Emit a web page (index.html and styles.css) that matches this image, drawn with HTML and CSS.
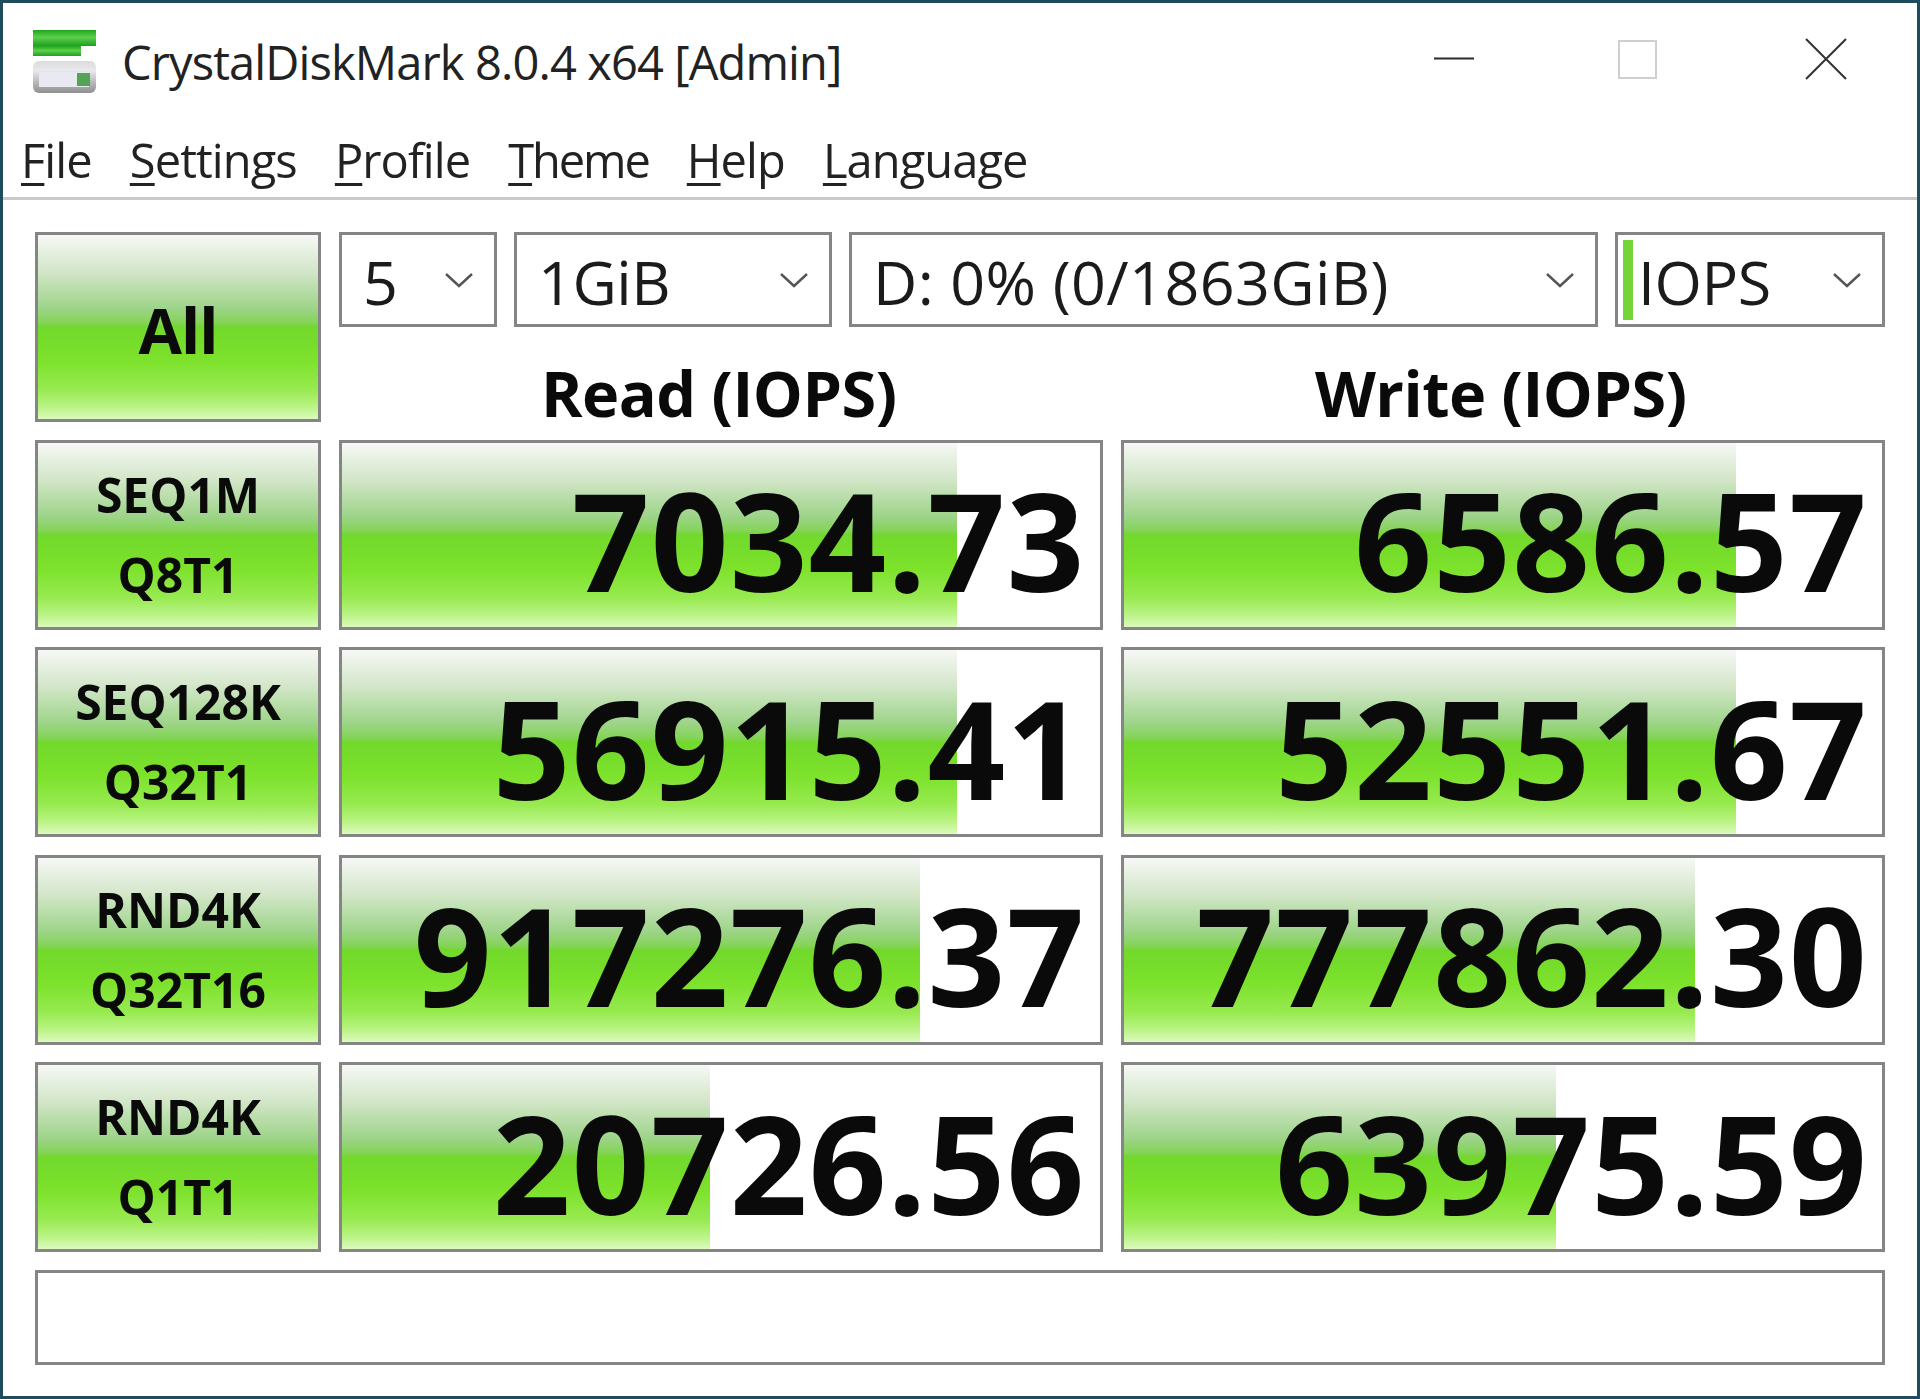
FILE: index.html
```html
<!DOCTYPE html>
<html lang="en">
<head>
<meta charset="utf-8">
<title>CrystalDiskMark 8.0.4 x64 [Admin]</title>
<link rel="stylesheet" href="styles.css">
</head>
<body>
<div class="window">
  <header class="titlebar">
    <svg class="app-icon" width="63" height="63" viewBox="0 0 63 63">
      <defs>
        <linearGradient id="gr" x1="0" y1="0" x2="0" y2="1"><stop offset="0" stop-color="#1fa51f"/><stop offset=".45" stop-color="#5ed04a"/><stop offset="1" stop-color="#1f9f25"/></linearGradient>
        <linearGradient id="dk" x1="0" y1="0" x2="0" y2="1"><stop offset="0" stop-color="#dcdcdc"/><stop offset=".3" stop-color="#e8e8ee"/><stop offset="1" stop-color="#8f8f8f"/></linearGradient>
      </defs>
      <rect x="0" y="0" width="63" height="16" fill="url(#gr)"/>
      <rect x="0" y="16" width="48" height="10" fill="url(#gr)"/>
      <rect x="0" y="31" width="63" height="32" rx="6" fill="url(#dk)"/>
      <rect x="6" y="42" width="50" height="15" fill="#e9e9f2"/>
      <rect x="44" y="43" width="13" height="13" fill="#55a355"/>
    </svg>
    <h1 class="title">CrystalDiskMark 8.0.4 x64 [Admin]</h1>
    <div class="controls">
      <svg class="ctl" width="42" height="42" viewBox="0 0 42 42"><path d="M1 20.5H41" stroke="#2b2b2b" stroke-width="2.2" fill="none"/></svg>
      <svg class="ctl" width="42" height="42" viewBox="0 0 42 42"><rect x="0" y="3" width="37" height="37" stroke="#cfcfcf" stroke-width="2" fill="none"/></svg>
      <svg class="ctl" width="42" height="42" viewBox="0 0 42 42"><path d="M1 1L41 41M41 1L1 41" stroke="#333" stroke-width="2" fill="none"/></svg>
    </div>
  </header>
  <nav class="menu">
    <span class="menu-item"><u>F</u>ile</span>
    <span class="menu-item"><u>S</u>ettings</span>
    <span class="menu-item"><u>P</u>rofile</span>
    <span class="menu-item menu-tight"><u>T</u>heme</span>
    <span class="menu-item"><u>H</u>elp</span>
    <span class="menu-item"><u>L</u>anguage</span>
  </nav>
  <main class="panel">
    <div class="btn btn-all">All</div>
    <div class="top">
      <div class="selects">
        <div class="combo combo-count"><span>5</span><svg class="chev" width="30" height="16" viewBox="0 0 30 16"><path d="M2 2L15 14L28 2" /></svg></div>
        <div class="combo combo-size"><span>1GiB</span><svg class="chev" width="30" height="16" viewBox="0 0 30 16"><path d="M2 2L15 14L28 2" /></svg></div>
        <div class="combo combo-drive"><span>D: 0% (0/1863GiB)</span><svg class="chev" width="30" height="16" viewBox="0 0 30 16"><path d="M2 2L15 14L28 2" /></svg></div>
        <div class="combo combo-unit"><i class="stripe"></i><span>IOPS</span><svg class="chev" width="30" height="16" viewBox="0 0 30 16"><path d="M2 2L15 14L28 2" /></svg></div>
      </div>
      <div class="heads">
        <div class="head">Read (IOPS)</div>
        <div class="head">Write (IOPS)</div>
      </div>
    </div>

    <div class="btn btn-test"><span>SEQ1M</span><span>Q8T1</span></div>
    <div class="cell"><i class="bar" style="width:81.2%"></i><span class="val">7034.73</span></div>
    <div class="cell"><i class="bar" style="width:80.8%"></i><span class="val">6586.57</span></div>

    <div class="btn btn-test"><span>SEQ128K</span><span>Q32T1</span></div>
    <div class="cell"><i class="bar" style="width:81.2%"></i><span class="val">56915.41</span></div>
    <div class="cell"><i class="bar" style="width:80.8%"></i><span class="val">52551.67</span></div>

    <div class="btn btn-test"><span>RND4K</span><span>Q32T16</span></div>
    <div class="cell"><i class="bar" style="width:76.3%"></i><span class="val">917276.37</span></div>
    <div class="cell"><i class="bar" style="width:75.3%"></i><span class="val">777862.30</span></div>

    <div class="btn btn-test"><span>RND4K</span><span>Q1T1</span></div>
    <div class="cell"><i class="bar" style="width:48.6%"></i><span class="val">20726.56</span></div>
    <div class="cell"><i class="bar" style="width:57%"></i><span class="val">63975.59</span></div>

    <div class="status"></div>
  </main>
</div>
</body>
</html>
```

FILE: styles.css
```css
* { box-sizing: border-box; }
html, body { margin: 0; padding: 0; }
body {
  width: 1920px;
  height: 1399px;
  font-family: "Open Sans", "Noto Sans", sans-serif;
  color: #0a0a0a;
  background: #fff;
  overflow: hidden;
}
.window {
  width: 1920px;
  height: 1399px;
  border: 3px solid #1f4b5c;
  background: #fff;
  display: flex;
  flex-direction: column;
  filter: blur(.6px);
}
.titlebar {
  height: 97px;
  display: flex;
  align-items: center;
  padding: 0 0 0 30px;
  flex: none;
}
.app-icon { flex: none; margin-top: 19px; }
.title {
  margin: 21px 0 0 26px;
  font-size: 47px;
  font-weight: 400;
  letter-spacing: -.88px;
  color: #222;
  white-space: nowrap;
  flex: 1;
}
.controls {
  display: grid;
  grid-template-columns: 186px 186px 186px;
  justify-items: center;
  flex: none;
  margin: 14px -2px 0 0;
}
.ctl { display: block; overflow: visible; }
.menu {
  height: 100px;
  flex: none;
  display: flex;
  gap: 38px;
  padding: 30px 0 0 18px;
  border-bottom: 3px solid #c9c9c9;
  font-size: 47px;
  letter-spacing: -.9px;
  color: #222;
  line-height: 60px;
}
.menu-tight { letter-spacing: -2.1px; }
.menu u { text-underline-offset: 5px; text-decoration-thickness: 3px; }
.panel {
  flex: 1;
  display: grid;
  grid-template-columns: 286px 763.5px 764.5px;
  grid-auto-rows: 190px;
  column-gap: 18px;
  row-gap: 17.5px;
  padding: 32px 0 0 32px;
  align-content: start;
}
.btn, .cell, .combo, .status { border: 3px solid #858585; }
.btn, .bar {
  background: linear-gradient(to bottom,
    #f6f8f5 0%, #d2e6c8 20%, #9dd488 40%, #82d455 48%, #72d82c 50%,
    #7ce22b 68%, #98ea50 84%, #bdf48a 94%, #dcfabd 100%);
}
.btn {
  display: flex;
  flex-direction: column;
  align-items: center;
  justify-content: center;
  font-weight: 700;
}
.btn-all { font-size: 63px; letter-spacing: -1px; padding-top: 4px; }
.btn-test { font-size: 48px; line-height: 80px; letter-spacing: 0; }
.top {
  grid-column: 2 / 4;
  display: flex;
  flex-direction: column;
}
.selects {
  display: grid;
  grid-template-columns: 158px 318px 749px 270px;
  column-gap: 17px;
  height: 95px;
  flex: none;
}
.combo {
  display: flex;
  align-items: center;
  font-size: 61px;
  letter-spacing: .4px;
  color: #1b1b1b;
  padding: 3px 20px 0 21px;
  justify-content: space-between;
  line-height: 1;
}
.combo-size, .combo-unit { letter-spacing: -.5px; }
.combo-unit { padding-left: 5px; justify-content: flex-start; }
.stripe { width: 10px; height: 80px; background: #74d43a; flex: none; margin: -3px 5px 0 0; }
.combo-unit .chev { margin-left: auto; }
.chev { flex: none; margin-top: -3px; }
.chev path { fill: none; stroke: #555; stroke-width: 2.4; }
.heads {
  flex: 1;
  display: grid;
  grid-template-columns: 763.5px 764.5px;
  column-gap: 18px;
}
.head {
  text-align: center;
  font-weight: 700;
  font-size: 63px;
  padding: 36px 4px 0 0;
  line-height: 60px;
  letter-spacing: -.5px;
}
.cell {
  position: relative;
  display: flex;
  justify-content: flex-end;
  align-items: center;
  padding-right: 14px;
}
.bar { position: absolute; left: 0; top: 0; bottom: 0; }
.val {
  position: relative;
  font-size: 136px;
  font-weight: 700;
  line-height: 1;
  letter-spacing: 1.2px;
  margin-top: 11px;
}
.status {
  grid-column: 1 / 4;
  height: 95px;
  align-self: start;
}
```
